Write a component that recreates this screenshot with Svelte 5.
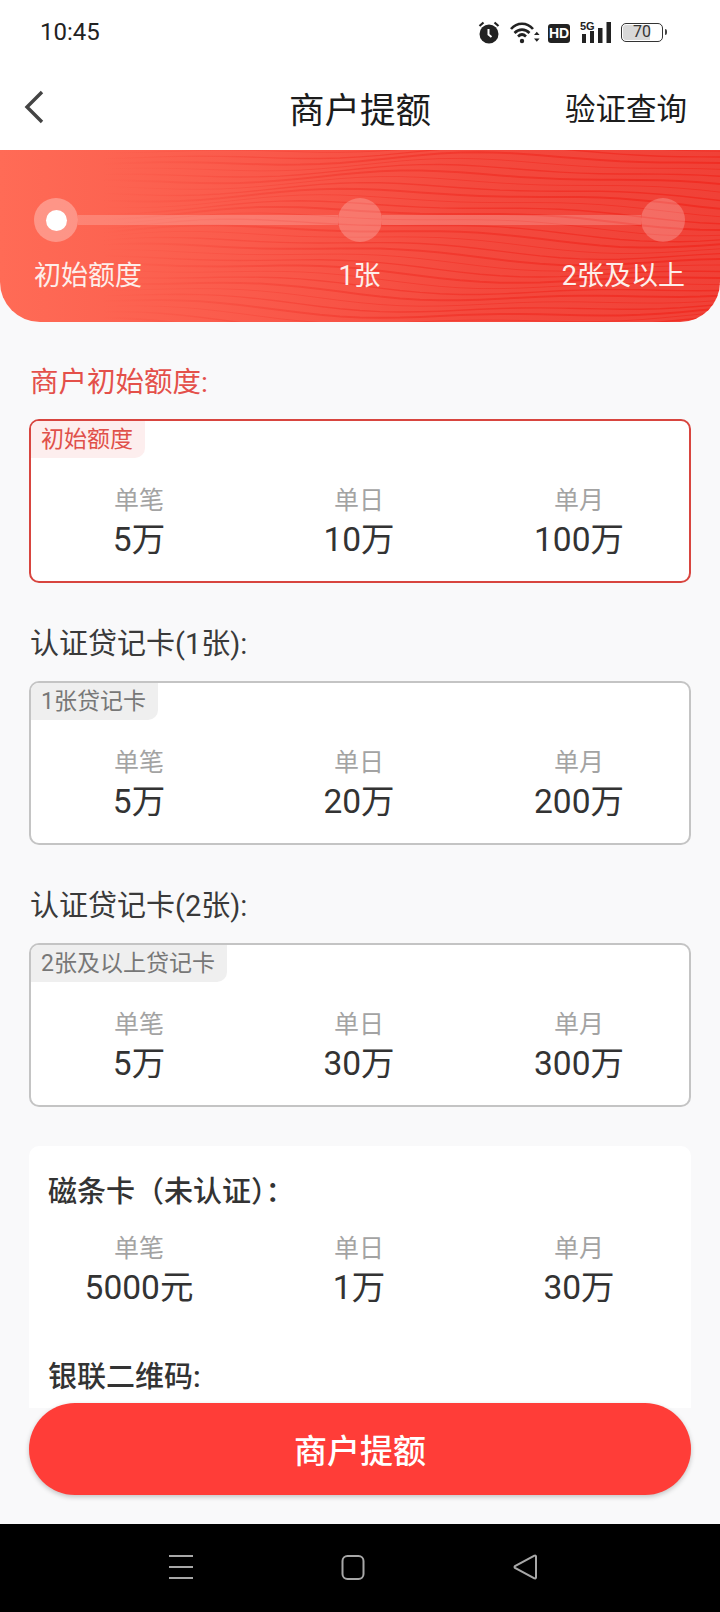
<script>
	const limits = [
		{ heading: '认证贷记卡(1张):', tag: '1张贷记卡', day: '20万', month: '200万' },
		{ heading: '认证贷记卡(2张):', tag: '2张及以上贷记卡', day: '30万', month: '300万' }
	];
	const steps = ['初始额度', '1张', '2张及以上'];

	// contour lines for the banner texture
	const waves = [];
	for (let i = 0; i < 30; i++) {
		const base = i * 6.2 - 6;
		let d = '';
		for (let x = 100; x <= 720; x += 20) {
			const y =
				base +
				7 * Math.sin(x / 120 + i * 0.16) +
				3 * Math.sin(x / 47 + i * 0.5) +
				(x / 720) * 8;
			d += `${x === 100 ? 'M' : 'L'}${x} ${y.toFixed(1)}`;
		}
		waves.push({ d, w: 0.8 + (i % 3) * 0.6 });
	}
</script>

<div class="page">
	<div class="status">
		<span class="time">10:45</span>
		<div class="status-icons">
			<svg width="22" height="23" viewBox="0 0 22 23">
				<circle cx="11" cy="13" r="9.500" fill="#222" />
				<path d="M10.500 8v5.500l3 2.500" stroke="#fff" stroke-width="2" fill="none" />
				<path d="M1.500 5l4-3.500M20.500 5l-4-3.500" stroke="#222" stroke-width="2.200" />
			</svg>
			<svg width="30" height="23" viewBox="0 0 30 23">
				<path d="M1 8C7 1 17 1 23 8M4.500 12c4.500-4.500 10.500-4.500 15 0M8 15.500c2.500-2.500 5.500-2.500 8 0" stroke="#222" stroke-width="2.600" fill="none" />
				<circle cx="12" cy="20" r="2.200" fill="#222" />
				<path d="M24 14l2.800-3.200 2.800 3.200zM24 17.500l2.800 3.200 2.800-3.200z" fill="#222" />
			</svg>
			<span class="hd">HD</span>
			<div class="signal">
				<span class="five-g">5G</span>
				<svg width="31" height="23" viewBox="0 0 31 23">
					<path d="M2 13h4v9H2zM10 10h4v12h-4zM18 7h4.500v15H18zM26.500 1h4.500v21h-4.500z" fill="#222" />
				</svg>
			</div>
			<div class="battery"><span class="level"></span><span class="pct">70</span></div>
		</div>
	</div>

	<header class="nav">
		<svg class="back" width="22" height="34" viewBox="0 0 22 34">
			<path d="M19 2L4 17l15 15" stroke="#444" stroke-width="3.400" fill="none" />
		</svg>
		<h1>商户提额</h1>
		<span class="verify">验证查询</span>
	</header>

	<div class="body">
		<section class="banner">
			<svg class="texture" viewBox="0 0 720 172" preserveAspectRatio="none">
				<defs>
					<linearGradient id="fade" gradientUnits="userSpaceOnUse" x1="100" y1="0" x2="720" y2="0">
						<stop offset="0" stop-color="#f0281e" stop-opacity="0" />
						<stop offset="0.45" stop-color="#f0281e" stop-opacity="0.45" />
						<stop offset="1" stop-color="#f0281e" stop-opacity="0.8" />
					</linearGradient>
				</defs>
				{#each waves as wave}
					<path d={wave.d} stroke="url(#fade)" stroke-width={wave.w} fill="none" />
				{/each}
			</svg>
			<div class="track">
				<span class="dot first"><i></i></span>
				<span class="line"></span>
				<span class="dot"></span>
				<span class="line"></span>
				<span class="dot"></span>
			</div>
			<div class="steps">
				{#each steps as step}
					<span>{step}</span>
				{/each}
			</div>
		</section>

		<main class="content">
			<h2 class="active">商户初始额度:</h2>
			<div class="card active">
				<span class="tag">初始额度</span>
				<div class="row">
					<div class="cell"><span>单笔</span><b>5万</b></div>
					<div class="cell"><span>单日</span><b>10万</b></div>
					<div class="cell"><span>单月</span><b>100万</b></div>
				</div>
			</div>

			{#each limits as item}
				<h2>{item.heading}</h2>
				<div class="card">
					<span class="tag">{item.tag}</span>
					<div class="row">
						<div class="cell"><span>单笔</span><b>5万</b></div>
						<div class="cell"><span>单日</span><b>{item.day}</b></div>
						<div class="cell"><span>单月</span><b>{item.month}</b></div>
					</div>
				</div>
			{/each}

			<div class="panel">
				<h3>磁条卡（未认证）：</h3>
				<div class="row">
					<div class="cell"><span>单笔</span><b>5000元</b></div>
					<div class="cell"><span>单日</span><b>1万</b></div>
					<div class="cell"><span>单月</span><b>30万</b></div>
				</div>
				<h3 class="second">银联二维码:</h3>
			</div>
		</main>

		<div class="footer">
			<button>商户提额</button>
		</div>
	</div>

	<nav class="system">
		<svg width="26" height="26" viewBox="0 0 26 26">
			<path d="M1 2h24M1 13h24M1 24h24" stroke="#a8a8a8" stroke-width="2" />
		</svg>
		<svg width="26" height="26" viewBox="0 0 26 26">
			<rect x="2.500" y="2" width="21" height="23" rx="5" stroke="#a8a8a8" stroke-width="2" fill="none" />
		</svg>
		<svg width="26" height="26" viewBox="0 0 26 26">
			<path d="M24 2.500v21a1 1 0 0 1-1.600.800L3 14a1.300 1.300 0 0 1 0-2L22.400 1.700a1 1 0 0 1 1.600.800z" stroke="#a8a8a8" stroke-width="2" fill="none" />
		</svg>
	</nav>
</div>

<style>
	:global(body) {
		margin: 0;
		background: #fff;
	}

	.page {
		width: 720px;
		height: 1612px;
		display: flex;
		flex-direction: column;
		overflow: hidden;
		background: #fff;
		color: #2c2c2c;
		font-family: Roboto, "Noto Sans CJK SC", sans-serif;
	}

	.status {
		height: 64px;
		flex: none;
		display: flex;
		align-items: center;
		justify-content: space-between;
		padding: 0 54px 0 40px;
		box-sizing: border-box;
	}

	.time {
		font-size: 24px;
		color: #222;
	}

	.status-icons {
		display: flex;
		align-items: center;
		gap: 10px;
	}

	.status-icons > svg:nth-child(2) {
		margin-right: -2px;
	}

	.hd {
		width: 22px;
		height: 19px;
		margin-top: 2px;
		background: #222;
		color: #fff;
		border-radius: 3px;
		font: 700 14px/19px "Liberation Sans", sans-serif;
		text-align: center;
	}

	.signal {
		position: relative;
		display: flex;
	}

	.five-g {
		position: absolute;
		left: 0;
		top: -1px;
		font: 700 11px/12px "Liberation Sans", sans-serif;
		color: #222;
	}

	.battery {
		position: relative;
		width: 42px;
		height: 19px;
		border: 1.500px solid #333;
		border-radius: 5px;
		box-sizing: border-box;
		margin-right: 3px;
	}

	.battery::after {
		content: "";
		position: absolute;
		right: -5px;
		top: 5px;
		width: 2px;
		height: 6px;
		background: #444;
		border-radius: 0 2px 2px 0;
	}

	.level {
		position: absolute;
		left: 1px;
		top: 1px;
		bottom: 1px;
		width: 27px;
		background: #d8d8d8;
		border-radius: 3px 0 0 3px;
	}

	.pct {
		position: relative;
		display: block;
		text-align: center;
		font-size: 16px;
		line-height: 16px;
		color: #333;
	}

	.nav {
		height: 86px;
		flex: none;
		display: grid;
		grid-template-columns: 1fr auto 1fr;
		align-items: center;
		padding: 0 33px;
		box-sizing: border-box;
	}

	.back {
		justify-self: start;
		margin-left: -10px;
	}

	.nav h1 {
		margin: 0;
		font-size: 35.500px;
		font-weight: 400;
		color: #1c1c1c;
	}

	.verify {
		justify-self: end;
		font-size: 30.500px;
		color: #1c1c1c;
	}

	.body {
		position: relative;
		flex: 1;
		min-height: 0;
		display: flex;
		flex-direction: column;
		background: #f9f9fa;
		overflow: hidden;
	}

	.banner {
		position: relative;
		flex: none;
		height: 172px;
		box-sizing: border-box;
		padding: 48px 35px 0 34px;
		background: linear-gradient(90deg, #ff6b56 0%, #fa5a4b 35%, #f44a3e 65%, #f04137 100%);
		border-radius: 0 0 40px 40px;
		overflow: hidden;
		color: #fff;
	}

	.texture {
		position: absolute;
		inset: 0;
		width: 100%;
		height: 100%;
	}

	.track {
		position: relative;
		height: 44px;
		display: flex;
		align-items: center;
	}

	.line {
		flex: 1;
		height: 10px;
		background: rgba(255, 255, 255, 0.2);
	}

	.dot {
		flex: none;
		width: 44px;
		height: 44px;
		border-radius: 50%;
		background: rgba(255, 255, 255, 0.22);
		display: flex;
		align-items: center;
		justify-content: center;
	}

	.dot.first {
		background: rgba(255, 255, 255, 0.3);
	}

	.dot i {
		width: 21px;
		height: 21px;
		border-radius: 50%;
		background: #fff;
	}

	.steps {
		position: relative;
		margin-top: 16px;
		display: grid;
		grid-template-columns: 1fr auto 1fr;
		font-size: 27px;
		line-height: 36px;
		color: #fdeeea;
	}

	.steps span:last-child {
		justify-self: end;
	}

	.content {
		flex: 1;
		padding: 0 29px;
	}

	h2 {
		margin: 42px 0 18px;
		padding-left: 1px;
		font-size: 29px;
		line-height: 38px;
		font-weight: 400;
		color: #3a3a3a;
	}

	h2.active {
		margin-top: 42px;
		margin-bottom: 17px;
		font-size: 28.500px;
		color: #e4504a;
	}

	.card {
		position: relative;
		height: 164px;
		box-sizing: border-box;
		border: 2px solid #c4c4c4;
		border-radius: 10px;
		background: #fff;
		padding-top: 61px;
	}

	.card.active {
		border-color: #d8453f;
	}

	.tag {
		position: absolute;
		left: 0;
		top: 0;
		height: 37px;
		padding: 0 12px 0 10px;
		font-size: 23px;
		line-height: 37px;
		color: #777;
		background: #efefef;
		border-radius: 8px 0 10px 0;
	}

	.card.active .tag {
		color: #e0504a;
		background: #fdeeee;
	}

	.row {
		display: grid;
		grid-template-columns: repeat(3, 1fr);
		margin-left: -2px;
	}

	.panel .row {
		margin-left: 0;
		padding-right: 2px;
	}

	.cell {
		display: flex;
		flex-direction: column;
		align-items: center;
	}

	.cell span {
		font-size: 25px;
		line-height: 38px;
		color: #a3a3a3;
	}

	.cell b {
		font-size: 33.500px;
		line-height: 40px;
		font-weight: 400;
		color: #333;
	}

	.panel {
		margin-top: 39px;
		height: 300px;
		background: #fff;
		border-radius: 10px;
		padding: 27px 0 0;
	}

	h3 {
		margin: 0 0 19px;
		padding-left: 19px;
		font-size: 29px;
		line-height: 38px;
		font-weight: 500;
		color: #333;
	}

	h3.second {
		margin-top: 50px;
	}

	.footer {
		position: absolute;
		left: 0;
		right: 0;
		bottom: 0;
		height: 116px;
		background: #f9f9fa;
		padding: 0 29px;
		box-sizing: border-box;
	}

	button {
		display: block;
		width: 100%;
		height: 92px;
		margin-top: -5px;
		border: none;
		border-radius: 46px;
		background: #ff3d38;
		color: #fff;
		font: 500 33px Roboto, "Noto Sans CJK SC", sans-serif;
		box-shadow: 0 2px 5px rgba(0, 0, 0, 0.22);
		position: relative;
	}

	.system {
		height: 88px;
		flex: none;
		background: #000;
		display: grid;
		grid-template-columns: repeat(3, 26px);
		justify-content: center;
		column-gap: 146px;
		align-items: center;
		padding: 0 14px 2px 0;
		box-sizing: border-box;
	}
</style>
